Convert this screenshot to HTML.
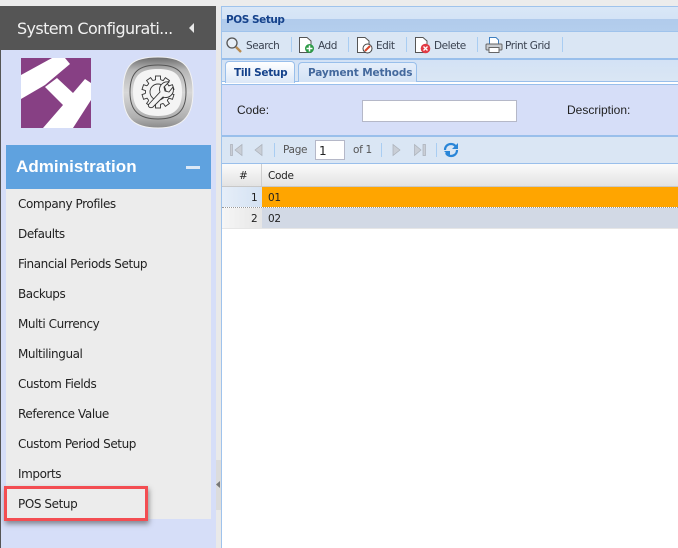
<!DOCTYPE html>
<html><head><meta charset="utf-8"><style>
html,body{margin:0;padding:0;width:678px;height:548px;overflow:hidden;background:#fff}
body{position:relative;font-family:"DejaVu Sans","Liberation Sans",sans-serif;color:#333}
div,span,svg{position:absolute;white-space:nowrap}
.m{left:18px;font:12px "DejaVu Sans",sans-serif;letter-spacing:-.42px;color:#222;line-height:16px}
.t{font:10.5px "DejaVu Sans",sans-serif;letter-spacing:-.45px;color:#3a4250;line-height:14px;top:39px}
.s{top:37px;width:1px;height:15px;background:#a9cdf2}
.s2{top:143px;width:1px;height:14px;background:#a9cdf2}
.r{font:10.5px "DejaVu Sans",sans-serif;letter-spacing:-.3px;color:#333;line-height:14px}
</style></head><body>
<div style="left:0;top:0;width:678px;height:6px;background:#ececec"></div>
<div style="left:0;top:6px;width:1px;height:542px;background:#555"></div>
<div style="left:1px;top:50px;width:215px;height:498px;background:#d6def8"></div>
<div style="left:1px;top:6px;width:215px;height:44px;background:#555"></div>
<div style="left:17px;top:18px;font:16px/22px 'DejaVu Sans',sans-serif;letter-spacing:-.62px;color:#f2f2f2">System Configurati...</div>
<svg style="left:188px;top:22px" width="8" height="12"><path d="M6 1V11L1 6Z" fill="#e8e8e8"/></svg>

<svg style="left:21px;top:58px" width="70" height="70" viewBox="0 0 70 70"><rect width="70" height="70" fill="#874084"/><path d="M0 17L31 0H44L49 6L24 27L0 41Z" fill="#fff"/><path d="M24 29L36 20L52 35L64 21L70 25V42L52 70H22L42 47Z" fill="#fff"/></svg>

<svg style="left:121px;top:56px" width="74" height="74" viewBox="0 0 74 74"><defs><linearGradient id="g" x1="0" y1="0" x2="0" y2="1"><stop offset="0" stop-color="#6a6a6a"/><stop offset=".18" stop-color="#b5b5b5"/><stop offset=".5" stop-color="#d8d8d8"/><stop offset=".85" stop-color="#b0b0b0"/><stop offset="1" stop-color="#8a8a8a"/></linearGradient></defs><path d="M37 1C60 1 72 8 72 36C72 62 60 72 37 72C12 72 2 62 2 36C2 8 12 1 37 1Z" fill="url(#g)" stroke="#f2f2f2"/><path d="M37 9C55 9 65 15 65 36C65 56 55 63 37 63C19 63 9 56 9 36C9 15 19 9 37 9Z" fill="none" stroke="#555" stroke-width="1"/><path d="M37 13C53 13 61 18 61 36C61 53 53 60 37 60C21 60 12 53 12 36C12 18 21 13 37 13Z" fill="#f4f4f4"/>
<g transform="translate(37 36)" fill="#f4f4f4" stroke="#333" stroke-width=".9"><rect x="-2.500" y="-16" width="5" height="6" transform="rotate(0)"/><rect x="-2.500" y="-16" width="5" height="6" transform="rotate(36)"/><rect x="-2.500" y="-16" width="5" height="6" transform="rotate(72)"/><rect x="-2.500" y="-16" width="5" height="6" transform="rotate(108)"/><rect x="-2.500" y="-16" width="5" height="6" transform="rotate(144)"/><rect x="-2.500" y="-16" width="5" height="6" transform="rotate(180)"/><rect x="-2.500" y="-16" width="5" height="6" transform="rotate(216)"/><rect x="-2.500" y="-16" width="5" height="6" transform="rotate(252)"/><rect x="-2.500" y="-16" width="5" height="6" transform="rotate(288)"/><rect x="-2.500" y="-16" width="5" height="6" transform="rotate(324)"/><circle r="12.500" stroke="none"/><circle r="12.500" fill="none" stroke-dasharray="2.850 5" stroke-dashoffset="1.425"/><circle r="8" fill="none"/><path d="M-9 12L2 0C0 -6 5 -11 11 -10L6 -5L7 -1L11 0L15 -5C17 2 11 7 5 5L-5 15C-8 17 -11 14 -9 12Z"/></g></svg>

<div style="left:6px;top:145px;width:205px;height:44px;background:#5fa2df"></div>
<div style="left:16px;top:156px;font:bold 17px/22px 'Liberation Sans',sans-serif;letter-spacing:.05px;color:#fff">Administration</div>
<div style="left:186px;top:166px;width:14px;height:3px;background:#dbe8f6"></div>
<div style="left:6px;top:189px;width:205px;height:330px;background:#ececec"></div>
<div class="m" style="top:196px">Company Profiles</div>
<div class="m" style="top:226px">Defaults</div>
<div class="m" style="top:256px">Financial Periods Setup</div>
<div class="m" style="top:286px">Backups</div>
<div class="m" style="top:316px">Multi Currency</div>
<div class="m" style="top:346px">Multilingual</div>
<div class="m" style="top:376px">Custom Fields</div>
<div class="m" style="top:406px">Reference Value</div>
<div class="m" style="top:436px">Custom Period Setup</div>
<div class="m" style="top:466px">Imports</div>
<div class="m" style="top:496px">POS Setup</div>
<div style="left:4px;top:486px;width:138px;height:29px;border:3px solid #f34d52;box-shadow:1px 3px 5px rgba(60,60,60,.55)"></div>

<div style="left:216px;top:6px;width:5px;height:542px;background:#e9e9e9"></div>
<div style="left:216px;top:460px;width:5px;height:50px;background:#dcdcdc"></div>
<svg style="left:216px;top:480px" width="5" height="9"><path d="M4 1V8L0 4.5Z" fill="#777"/></svg>

<div style="left:221px;top:6px;width:457px;height:542px;background:#fff;border-left:1px solid #9fc3ec;box-sizing:border-box"></div>
<div style="left:222px;top:6px;width:456px;height:26px;background:linear-gradient(#d9e7f7 0,#d4e3f6 50%,#b1cbec 50%,#b4ceed 100%);border-top:1px solid #9fc3ec;border-bottom:1px solid #9fc3ec;box-sizing:border-box"></div>
<div style="left:226px;top:13px;font:bold 10.5px/14px 'DejaVu Sans',sans-serif;letter-spacing:-.45px;color:#15428b">POS Setup</div>
<div style="left:222px;top:32px;width:456px;height:28px;background:#dae6f4;border-bottom:2px solid #99bfeb;box-sizing:border-box"></div>

<svg style="left:225px;top:36px" width="18" height="18"><circle cx="7" cy="7" r="5" fill="#e7eef6" stroke="#555" stroke-width="1.3"/><path d="M11 11L16 16" stroke="#b98b50" stroke-width="2.4"/></svg>
<div class="t" style="left:246px">Search</div><div class="s" style="left:291px"></div>
<svg style="left:298px;top:36px" width="18" height="18"><path d="M1.500 1.500H9L13 5V16.500H1.500Z" fill="#fff" stroke="#555"/><circle cx="11.500" cy="12.500" r="4.500" fill="#2c9a46"/><path d="M8.500 12.500H14.500M11.500 9.500V15.500" stroke="#fff" stroke-width="1.500"/></svg>
<div class="t" style="left:318px">Add</div><div class="s" style="left:348px"></div>
<svg style="left:356px;top:36px" width="18" height="18"><path d="M1.500 1.500H9L13 5V16.500H1.500Z" fill="#fff" stroke="#555"/><circle cx="11.500" cy="12.500" r="4.500" fill="#fff" stroke="#444"/><path d="M9 15L14 10" stroke="#d8452a" stroke-width="2"/></svg>
<div class="t" style="left:376px">Edit</div><div class="s" style="left:406px"></div>
<svg style="left:414px;top:36px" width="18" height="18"><path d="M1.500 1.500H9L13 5V16.500H1.500Z" fill="#fff" stroke="#555"/><circle cx="11.500" cy="12.500" r="4.800" fill="#e23a44"/><path d="M9.500 10.500L13.500 14.500M13.500 10.500L9.500 14.500" stroke="#fff" stroke-width="1.300"/></svg>
<div class="t" style="left:434px">Delete</div><div class="s" style="left:477px"></div>
<svg style="left:485px;top:36px" width="18" height="18"><path d="M4.500 8V1.500H11L13.500 4V8" fill="#fff" stroke="#3f7fc0"/><rect x="1" y="8" width="16" height="6" rx="1" fill="#c9ccd0" stroke="#666"/><rect x="4" y="11.500" width="10" height="5" fill="#fff" stroke="#666"/></svg>
<div class="t" style="left:505px">Print Grid</div><div class="s" style="left:562px"></div>

<div style="left:222px;top:60px;width:456px;height:22px;background:linear-gradient(#d3e2f5,#dae6f4);border-bottom:1px solid #99bfeb;box-sizing:border-box"></div>
<div style="left:225px;top:61px;width:70px;height:22px;background:linear-gradient(#fff,#dbe7f7);border:1px solid #99bfeb;border-bottom:0;border-radius:4px 4px 0 0;box-sizing:border-box"></div>
<div style="left:234px;top:66px;font:bold 10.5px/14px 'DejaVu Sans',sans-serif;letter-spacing:-.3px;color:#15428b">Till Setup</div>
<div style="left:298px;top:62px;width:119px;height:20px;background:linear-gradient(#e5eefa,#d3e2f5);border:1px solid #99bfeb;border-bottom:0;border-radius:4px 4px 0 0;box-sizing:border-box"></div>
<div style="left:308px;top:66px;font:bold 10.5px/14px 'DejaVu Sans',sans-serif;letter-spacing:-.13px;color:#44699d">Payment Methods</div>

<div style="left:222px;top:84px;width:456px;height:53px;background:#d6def8;border-top:1px solid #99bfeb;border-bottom:2px solid #99bfeb;box-sizing:border-box"></div>
<div style="left:237px;top:103px;font:12px/14px 'Liberation Sans',sans-serif;color:#222">Code:</div>
<div style="left:362px;top:100px;width:155px;height:22px;background:#fff;border:1px solid #b5b8c8;box-sizing:border-box"></div>
<div style="left:567px;top:103px;font:12px/14px 'Liberation Sans',sans-serif;color:#222">Description:</div>

<div style="left:222px;top:137px;width:456px;height:27px;background:#dae6f4;border-bottom:1px solid #99bfeb;box-sizing:border-box"></div>
<svg style="left:229px;top:143px" width="16" height="14"><path d="M1.500 1.500V12.500H3.500V1.500ZM13 1.500V12.500L6 7Z" fill="#c9ced6" stroke="#aab0b8" stroke-width=".7"/></svg>
<svg style="left:254px;top:143px" width="10" height="14"><path d="M8 1.500V12.500L1 7Z" fill="#c9ced6" stroke="#aab0b8" stroke-width=".7"/></svg>
<div class="s2" style="left:274px"></div>
<div class="r" style="left:283px;top:143px;color:#555">Page</div>
<div style="left:315px;top:140px;width:30px;height:20px;background:#fff;border:1px solid #b5b8c8;box-sizing:border-box;font:12px/20px 'DejaVu Sans',sans-serif;padding-left:3px;color:#222">1</div>
<div class="r" style="left:353px;top:143px;color:#555">of 1</div>
<div class="s2" style="left:381px"></div>
<svg style="left:391px;top:143px" width="10" height="14"><path d="M2 1.500V12.500L9 7Z" fill="#c9ced6" stroke="#aab0b8" stroke-width=".7"/></svg>
<svg style="left:413px;top:143px" width="16" height="14"><path d="M1.500 1.500V12.500L8 7ZM10 1.500V12.500H12.500V1.500Z" fill="#c9ced6" stroke="#aab0b8" stroke-width=".7"/></svg>
<div class="s2" style="left:436px"></div>
<svg style="left:443px;top:142px" width="16" height="16" fill="none" stroke="#2a86d8" stroke-width="2.200"><path d="M2 8C2 4 5 2 8 2C10 2 12 3 13 5"/><path d="M14 8C14 12 11 14 8 14C6 14 4 13 3 11"/><path d="M9 7H15V1Z M1 9H7V15Z" fill="#2a86d8" stroke="none"/></svg>

<div style="left:222px;top:164px;width:456px;height:23px;background:linear-gradient(#fbfbfb,#e3e3e3);border-bottom:1px solid #c8c8c8;box-sizing:border-box"></div>
<div style="left:261px;top:164px;width:1px;height:22px;background:#cfcfcf"></div>
<div class="r" style="left:239px;top:169px;color:#222">#</div>
<div class="r" style="left:268px;top:169px;color:#222">Code</div>
<div style="left:222px;top:187px;width:40px;height:20px;background:linear-gradient(90deg,#e6eef8,#d4e2f3)"></div>
<div style="left:262px;top:187px;width:416px;height:20px;background:#ffa500"></div>
<div style="left:222px;top:207px;width:456px;border-top:1px dotted #999"></div>
<div style="left:222px;top:208px;width:40px;height:20px;background:linear-gradient(90deg,#f6f6f6,#e6e6e6)"></div>
<div style="left:262px;top:208px;width:416px;height:20px;background:#d2d9e5"></div>
<div style="left:222px;top:228px;width:456px;height:1px;background:#e6e6e6"></div>
<div class="r" style="left:251px;top:191px;color:#222">1</div>
<div class="r" style="left:268px;top:191px;color:#222">01</div>
<div class="r" style="left:251px;top:212px;color:#222">2</div>
<div class="r" style="left:268px;top:212px;color:#222">02</div>
</body></html>
